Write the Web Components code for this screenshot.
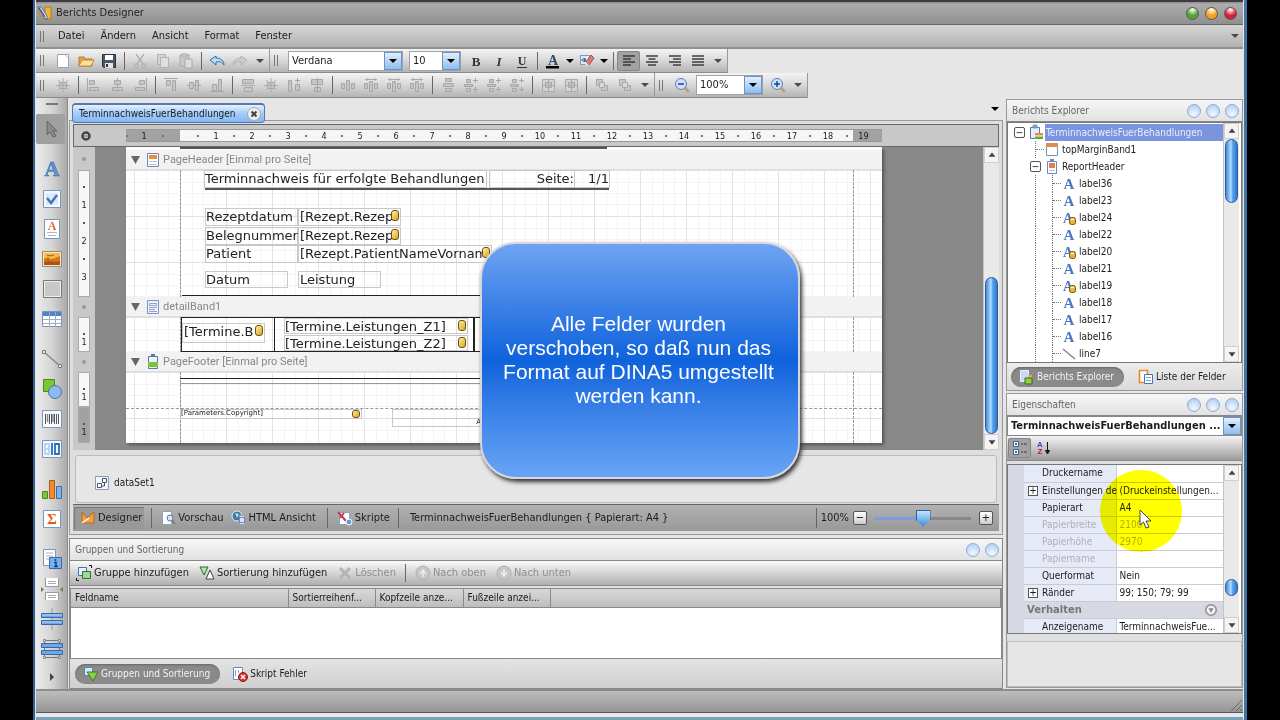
<!DOCTYPE html>
<html lang="de">
<head>
<meta charset="utf-8">
<title>Berichts Designer</title>
<style>
html,body{margin:0;height:100%;background:#000}
body{font:10px/14px "DejaVu Sans Condensed","DejaVu Sans",sans-serif;color:#1c1c1c}
</style>
</head>
<body>
<report-designer></report-designer>
<script>
const define=(name,css,html,setup)=>{
  const t=document.createElement('template');
  t.innerHTML=`<style>*{box-sizing:border-box}button,select,input{font:inherit;color:inherit;margin:0}button{background:none;border:0;padding:0}${css}</style>${html}`;
  customElements.define(name,class extends HTMLElement{
    constructor(){super();this.attachShadow({mode:'open'}).append(t.content.cloneNode(true));}
    connectedCallback(){if(setup&&!this.ready){this.ready=true;setup(this,this.shadowRoot);}}
  });
};

/* ---------- icons ---------- */
const serif='font-family="Liberation Serif,serif" font-weight="bold" text-anchor="middle"';
const db='<rect x="8.5" y="7.5" width="6" height="7" rx="2" fill="#e5b23a" stroke="#7d5712"/><path d="M10 9.5h3" stroke="#fff3b8" stroke-width="1.5"/>';
const bars=w=>[3,6,9,12].map((y,i)=>`<path d="M${8-w[i]/2} ${y}h${w[i]}" stroke="#333" stroke-width="1.4"/>`).join('');
const g='fill="#c6c6c6" stroke="#a6a6a6"';
const ICONS={
 app:'<path d="M2 3l6 9V2h6v12H6L1 6z" fill="#f2b62c" stroke="#a86a10" stroke-width=".7"/><path d="M1 2h3l6 9v3l-3-1z" fill="#e8f0fb" stroke="#33549a" stroke-width=".8"/><path d="M2 3l6 9" stroke="#3c62b5" stroke-width="1.5"/>',
 new:'<path d="M2.5 1.5h11v13h-11z" fill="#fff" stroke="#98a4b8"/><path d="M10 2l3 3" stroke="#c5cedd"/>',
 open:'<path d="M1 13V4h5l1 2h7v7z" fill="#e8a74a" stroke="#a7681c" stroke-width=".8"/><path d="M1 13l3-6h12l-3 6z" fill="#ffdf97" stroke="#b77c2a" stroke-width=".8"/>',
 save:'<path d="M1.5 1.5h13v13h-12l-1-1z" fill="#4b5666" stroke="#27303c"/><path d="M4 2h8v5H4z" fill="#fff"/><path d="M4 10h8v5H4z" fill="#dfe5ec"/><path d="M5 11h2v3H5z" fill="#333"/>',
 cut:'<path d="M4 1l7 10M12 1L5 11" stroke="#b2b2b2" stroke-width="1.4"/><g fill="none" stroke="#b2b2b2" stroke-width="1.3"><circle cx="4" cy="13" r="2"/><circle cx="12" cy="13" r="2"/></g>',
 copy:'<path d="M2.5 1.5h8v10h-8z" fill="#d4d4d4" stroke="#b2b2b2"/><path d="M5.5 4.5h8v10h-8z" fill="#dedede" stroke="#b2b2b2"/>',
 paste:'<path d="M2 2h9v11H2z" fill="#c8c8c8" stroke="#aaa"/><path d="M4 1h5v2H4zM7 6h7v9H7z" fill="#ddd" stroke="#aaa"/>',
 undo:'<path d="M1 7l6-4v2c5 0 8 3 8 7-2-3-4-4-8-3v3z" fill="#b9dcf5" stroke="#2f6ea3"/>',
 redo:'<path d="M15 7L9 3v2C4 5 1 8 1 12c2-3 4-4 8-3v3z" fill="#ccc" stroke="#b2b2b2"/>',
 down:'<path d="M4 6h8l-4 4z" fill="#4a4a4a"/>',
 downb:'<path d="M4 6h8l-4 4z" fill="#000"/>',
 right:'<path d="M6 4v8l4-4z" fill="#444"/>',
 bold:`<text x="8" y="13" font-size="13" ${serif} fill="#333">B</text>`,
 italic:`<text x="8" y="13" font-size="13" font-style="italic" ${serif} fill="#333">I</text>`,
 underline:`<text x="8" y="12" font-size="12" ${serif} fill="#333">U</text><path d="M3 14.5h10" stroke="#333"/>`,
 color:`<text x="8" y="12" font-size="14" ${serif} fill="#33486b">A</text><path d="M1 13h13v2.5H1z" fill="#000"/>`,
 mark:'<path d="M1.5 2.5h9v9h-9z" fill="#dbe9fb" stroke="#6f9bd3"/><path d="M3 8c0-3 3-3 3 0M6 5v4M4 8h2" stroke="#246" fill="none"/><path d="M7 9l5-7 3 3-5 7z" fill="#e07a7a" stroke="#a34949"/><path d="M7 9l3 3-4 1z" fill="#f4d6c8"/><path d="M2 14.5h11" stroke="#bbb"/>',
 left:[3,6,9,12].map((y,i)=>`<path d="M2 ${y}h${i%2?8:12}" stroke="#333" stroke-width="1.4"/>`).join(''),
 center:bars([12,7,12,8]),
 rightal:[3,6,9,12].map((y,i)=>`<path d="M${i%2?6:2} ${y}H14" stroke="#333" stroke-width="1.4"/>`).join(''),
 justify:bars([12,12,12,12]),
 agrid:`<path d="M4.5 5.5h7v6h-7z" ${g}/><path d="M8 1v14M1 8.5h14M3 3l2 2M13 3l-2 2M3 13l2-2M13 13l-2-2" stroke="#aaa"/>`,
 al:`<path d="M1.5 1v14" stroke="#a6a6a6"/><path d="M3.5 3.5h5v4h-5zM3.5 10.5h9v3h-9z" ${g}/>`,
 ac:`<path d="M8.5 1v14" stroke="#a6a6a6"/><path d="M5.5 3.5h6v4h-6zM3.5 10.5h10v3h-10z" ${g}/>`,
 ar:`<path d="M14.5 1v14" stroke="#a6a6a6"/><path d="M7.5 3.5h5v4h-5zM3.5 10.5h9v3h-9z" ${g}/>`,
 at:`<path d="M1 1.5h14" stroke="#a6a6a6"/><path d="M3.5 3.5h4v5h-4zM9.5 3.5h3v10h-3z" ${g}/>`,
 am:`<path d="M1 8.5h14" stroke="#a6a6a6"/><path d="M3.5 5.5h4v6h-4zM9.5 3.5h3v10h-3z" ${g}/>`,
 ab:`<path d="M1 14.5h14" stroke="#a6a6a6"/><path d="M3.5 7.5h4v6h-4zM9.5 2.5h3v11h-3z" ${g}/>`,
 sw:`<path d="M2.5 2.5h11v4h-11zM4.5 10.5h8v4h-8z" ${g}/><path d="M1 8.5h14" stroke="#a6a6a6"/>`,
 sh:`<path d="M2.5 3.5h3v11h-3zM9.5 7.5h4v6h-4z" ${g}/><path d="M11.5 1v5M9 3.5h5" stroke="#a6a6a6"/>`,
 sb:`<path d="M2.5 2.5h11v5h-11zM5.5 10.5h6v4h-6z" ${g}/><path d="M8.5 1v14" stroke="#a6a6a6"/>`,
 hz:`<path d="M1.5 6.5h3v5h-3zM6.5 3.5h3v10h-3zM11.5 6.5h3v5h-3z" ${g}/>`,
 ht:`<path d="M1.5 6.5h3v5h-3zM6.5 4.5h3v10h-3zM11.5 6.5h3v5h-3z" ${g}/><path d="M2 2.5h12M4 1v3M12 1v3" stroke="#aaa"/>`,
 vz:`<path d="M5.5 1.5h6v3h-6zM3.5 6.5h10v3h-10zM5.5 11.5h6v3h-6z" ${g}/>`,
 vp:`<path d="M3.5 2.5h4v3h-4zM1.5 7.5h8v2h-8zM3.5 11.5h4v3h-4z" ${g}/><path d="M12.5 1v5M10 3.5h5M12.5 10v5M10 12.5h5" stroke="#a6a6a6"/>`,
 fr:`<path d="M2.5 2.5h12v12h-12z" fill="#d4d4d4" stroke="#aaa"/><path d="M5.5 5.5h6v5h-6z" ${g}/><path d="M8.5 2v13M2 8.5h13" stroke="#aaa"/>`,
 fo:`<path d="M2.5 2.5h6v6h-6zM7.5 8.5h6v5h-6z" ${g}/><path d="M5.5 5.5h5v5h-5z" fill="#d8d8d8" stroke="#aaa"/>`,
 zout:'<path d="M11 11l4 4" stroke="#c99b78" stroke-width="3"/><circle cx="7" cy="7" r="5.5" fill="#cfe0f8" stroke="#5a7fb8"/><path d="M4 7h6" stroke="#1d4690" stroke-width="1.5"/>',
 zin:'<path d="M11 11l4 4" stroke="#c99b78" stroke-width="3"/><circle cx="7" cy="7" r="5.5" fill="#cfe0f8" stroke="#5a7fb8"/><path d="M4 7h6M7 4v6" stroke="#1d4690" stroke-width="1.5"/>',
 gear:'<circle cx="8" cy="8" r="3.5" fill="#d6d6d6" stroke="#444" stroke-width="2.5"/><path d="M6.5 8h3" stroke="#444"/>',
 dot:'<circle cx="8" cy="8" r="2" fill="#999"/>',
 tri:'<path d="M4 4h9l-4.5 8z" fill="#666"/>',
 bandh:'<path d="M2.5 1.5h11v13h-11z" fill="#fff" stroke="#6b86b5"/><path d="M4 3h8v4H4z" fill="#ee8a3c"/><path d="M4 9.5h8M4 12.5h8" stroke="#b8c5dc"/>',
 bandd:'<path d="M2.5 1.5h11v13h-11z" fill="#eef3fb" stroke="#7a92bc"/><path d="M4.5 4.5h7v2h-7zM4 8.5h8M4 10.5h6M4 12.5h8" stroke="#8fa3c8" fill="none"/>',
 bandf:'<path d="M3.5 2.5h9v12h-9z" fill="#eef3fb" stroke="#5577ad"/><path d="M6 0h4v3H6z" fill="#5577ad"/><path d="M3 8h10v5H3z" fill="#7cc33c"/>',
 clip:'<path d="M2.5 2.5h9v11h-9z" fill="#e6eefb" stroke="#5a79ab"/><path d="M5 0h4v3H5z" fill="#8aa4cc" stroke="#5a79ab" stroke-width=".6"/><path d="M7 8h8v3H7z" fill="#ef8a2e"/><path d="M7 11h8v3H7z" fill="#5fa83a"/><path d="M7 11h8" stroke="#fff"/>',
 topm:'<path d="M2.5 2.5h11v11h-11z" fill="#fff" stroke="#7d93bb"/><path d="M2 1h12v4H2z" fill="#e58a4e"/>',
 rephead:'<path d="M3.5 2.5h9v12h-9z" fill="#fff" stroke="#6c88b8"/><path d="M6 0h4v3H6z" fill="#6c88b8"/><path d="M5 4h6v5H5z" fill="#dd8350"/><path d="M5 11.5h6" stroke="#b8c5dc"/>',
 lab:`<text x="8" y="13" font-size="15" ${serif} fill="#4779c4">A</text>`,
 labdb:`<text x="7" y="13" font-size="14" ${serif} fill="#4779c4">A</text>${db}`,
 line:'<path d="M2 3l12 10" stroke="#888" stroke-width="1.5"/>',
 explorer:'<path d="M1.5 1.5h8v11h-8z" fill="#c9daf5" stroke="#e8eefa"/><path d="M9 6h4v5H9z" fill="#d9b64e"/><path d="M6 9h7v6H6z" fill="#8fcf4a" stroke="#356a16"/>',
 fields:'<path d="M1.5 1.5h8v12h-8z" fill="#fff" stroke="#e08a33" stroke-width="1.6"/><path d="M6.5 5.5h8v9h-8z" fill="#fff" stroke="#4775b8"/><path d="M8 8.5h5M8 11.5h5" stroke="#7ba0d8"/>',
 cat:'<path d="M1.5 1.5h5v5h-5zM1.5 9.5h5v5h-5z" fill="#f4f8ff" stroke="#3b5f94"/><path d="M3 4h2M4 3v2M3 12h2M4 11v2M9 4h2M12 4h3M9 12h2M12 12h3" stroke="#2b3c58"/>',
 az:'<text x="5" y="7" font-size="8" font-weight="bold" text-anchor="middle" font-family="Liberation Sans,sans-serif" fill="#3358b8">A</text><text x="5" y="14" font-size="8" font-weight="bold" text-anchor="middle" font-family="Liberation Sans,sans-serif" fill="#a3282c">Z</text><path d="M12.5 2v9M10.5 10.5l2 3.5 2-3.5z" stroke="#111" fill="#111"/>',
 dataset:'<path d="M1.5 1.5h13v13h-13z" fill="#f3f6fb" stroke="#8c9bb5"/><path d="M8.5 3.5h4v4h-4zM3.5 8.5h4v4h-4z" fill="#fff" stroke="#44566f"/><path d="M10.5 8v3H8" stroke="#44566f" fill="none"/>',
 design:'<path d="M2 2l5 6 7-6v11H2z" fill="#f3a13d" stroke="#b86a1c"/><path d="M2 13l7-5" stroke="#fff" stroke-width="1.5"/>',
 preview:'<path d="M2.5 1.5h9v13h-9z" fill="#fff" stroke="#8da0bf"/><circle cx="10" cy="8" r="3" fill="#d5e6f8" stroke="#57779f"/><path d="M12 10l3 4" stroke="#777" stroke-width="1.5"/>',
 html:'<circle cx="6" cy="6" r="5" fill="#3b78b4" stroke="#eee"/><path d="M4 3l4 1-2 4z" fill="#bfe2b0"/><path d="M8.5 5.5h5v9h-5z" fill="#fff" stroke="#8da0bf"/><circle cx="11" cy="10" r="3" fill="#d5e6f8" stroke="#57779f"/>',
 script:'<path d="M2.5 2.5h10v12h-10z" fill="#fff" stroke="#8da0bf"/><path d="M1 2l8 9M7 3L3 8" stroke="#c33a54" stroke-width="2"/><circle cx="12" cy="12" r="3" fill="#5d9de0" stroke="#fff"/>',
 addgroup:'<path d="M2.5 2.5h8v8h-8z" fill="#e9f2fd" stroke="#4770ae"/><path d="M6.5 6.5h8v7h-8z" fill="#9edb91" stroke="#337330"/><path d="M.5 13v2.5H3M13 .5h2.5V3" stroke="#111" fill="none"/>',
 addsort:'<path d="M1 2h8l-4 8z" fill="#b8e0ae" stroke="#2f6a34"/><path d="M11 5l4 9H7z" fill="#fff" stroke="#444"/>',
 del:'<path d="M3 3l10 10M13 3L3 13" stroke="#b4b4b4" stroke-width="3"/>',
 up:'<circle cx="8" cy="8" r="7" fill="#c6c6c6" stroke="#b0b0b0"/><path d="M5 9l3-4 3 4M8 5v7" stroke="#eee" stroke-width="1.5" fill="none"/>',
 dn:'<circle cx="8" cy="8" r="7" fill="#c6c6c6" stroke="#b0b0b0"/><path d="M5 7l3 4 3-4M8 11V4" stroke="#eee" stroke-width="1.5" fill="none"/>',
 grp:'<path d="M1.5 1.5h8v8h-8z" fill="#d7e6fa" stroke="#5b83b8"/><path d="M4 6h11l-5 9z" fill="#8bd04a" stroke="#3d7d1b"/>',
 err:'<path d="M1.5 1.5h9v12h-9z" fill="#fff" stroke="#6d88b3"/><path d="M3.5 4v6M6.5 4v3" stroke="#7ba0d8"/><circle cx="11" cy="11" r="4.5" fill="#d6332f" stroke="#8c1613"/><path d="M9 9l4 4M13 9l-4 4" stroke="#fff" stroke-width="1.4"/>',
 close:'<circle cx="8" cy="8" r="6.5" fill="#eee" stroke="#aaa"/><path d="M5.5 5.5l5 5M10.5 5.5l-5 5" stroke="#444" stroke-width="2"/>',
 scup:'<path d="M4 10l4-5 4 5z" fill="#444"/>',
 scdown:'<path d="M4 6l4 5 4-5z" fill="#444"/>',
 resize:'<path d="M15 4L4 15M15 9l-6 6M15 13l-2 2" stroke="#6a6a6a"/>',
 chev:'<circle cx="8" cy="8" r="6" fill="#f4f4f4" stroke="#999" stroke-width="2"/><path d="M5 6h6l-3 5z" fill="#888"/>'
};
/* toolbox icons on a 22 unit grid */
const BIG={
 pointer:'<path d="M7 3v14l3-3 3 5 3-1-3-5h4z" fill="#8a8a8a" stroke="#666"/>',
 alabel:`<text x="11" y="18" font-size="21" ${serif} fill="#5b93cf" stroke="#3c6ea8" stroke-width=".5">A</text>`,
 check:'<path d="M2.5 2.5h17v17h-17z" fill="#f5f8fd" stroke="#7c95bd"/><path d="M5 5h12v12H5z" fill="#dfe9f7"/><path d="M6 10l4 5 6-8" stroke="#4377ba" stroke-width="2.5" fill="none"/>',
 rich:`<path d="M3.5 1.5h15v19h-15z" fill="#fff" stroke="#7c95bd"/><text x="11" y="12" font-size="12" ${serif} fill="#e26a3a">A</text><path d="M6 14.5h10M7 17.5h8" stroke="#a9b9d4"/>`,
 pic:'<path d="M1.5 3.5h19v15h-19z" fill="#f4e9d4" stroke="#9a8a6a"/><path d="M3 5h16v12H3z" fill="#d9761c"/><path d="M3 5h16v3l-8 3-8-1z" fill="#f7b947"/><path d="M6 7c2 1 5 1 7 0M7 9v4" stroke="#a0561a" fill="none"/><path d="M3 14c5-2 10 1 16-1v4H3z" fill="#a9540f"/>',
 panel:'<path d="M2.5 2.5h18v17h-18z" fill="#eee" stroke="#777"/><path d="M4 4h15v14H4z" fill="#c8c8c8"/>',
 table:'<path d="M1.5 3.5h19v15h-19z" fill="#fff" stroke="#7d92b6"/><path d="M2 4h18v4H2z" fill="#4c84cc"/><path d="M2 11.5h18M2 15.5h18M8.5 4v15M14.5 4v15" stroke="#9aacc9"/>',
 bline:'<path d="M3 4l16 14" stroke="#888" stroke-width="1.5"/><path d="M1.5 2.5h3v3h-3zM17.5 16.5h3v3h-3z" fill="#eee" stroke="#777"/>',
 shape:'<path d="M2.5 1.5h11v12h-11z" fill="#7cc62f" stroke="#4b8a16"/><circle cx="14" cy="14" r="6.5" fill="#8fb9ea" stroke="#4770a8"/>',
 barcode:'<path d="M1.5 2.5h19v17h-19z" fill="#f7f9fc" stroke="#7c95bd"/><path d="M4.5 6v10M8.5 6v10M10.5 6v10M13.5 6v10M15.5 6v10M17.5 6v10" stroke="#555"/><path d="M6.5 6v8M12 6v8" stroke="#888" stroke-width="1.5"/>',
 digit:'<path d="M1.5 2.5h19v17h-19z" fill="#f4f8fd" stroke="#7c95bd"/><path d="M4 6h4v10H4zM4 11h4" stroke="#a9cbea" stroke-width="1.5" fill="none"/><path d="M11 5v12M14 6h4v10h-4z" stroke="#2c6cb8" stroke-width="1.8" fill="none"/>',
 chart:'<path d="M1.5 13.5h5v7h-5z" fill="#7ec43a" stroke="#4e8a1d"/><path d="M8.5 2.5h5v18h-5z" fill="#f08a33" stroke="#ad5a18"/><path d="M15.5 8.5h5v12h-5z" fill="#7fb1ee" stroke="#41689f"/>',
 sum:'<path d="M2.5 2.5h17v17h-17z" fill="#fff" stroke="#7c95bd"/><text x="11" y="16" font-size="15" font-weight="bold" text-anchor="middle" font-family="Liberation Serif,serif" fill="#df5d21">Σ</text>',
 info:'<path d="M2.5 1.5h12v16h-12z" fill="#fff" stroke="#8095b8"/><path d="M5 5h7M5 8h7M5 11h3" stroke="#9fb0cb"/><path d="M8.5 9.5h12v11h-12z" fill="#7bb0ee" stroke="#3c68a5"/><path d="M14.5 11v2M13 14.5h2v4M13 18.5h4" stroke="#123f80" stroke-width="1.5" fill="none"/>',
 brk:'<path d="M4.5 0v8.5h13V0M4.5 22v-7.5h13V22" fill="#fff" stroke="#999"/><path d="M7 3.5h8M7 5.5h8M7 17.5h8M7 19.5h8" stroke="#aaa"/><path d="M0 9l3 2.5L0 14zM22 9l-3 2.5 3 2.5z" fill="#5a8a44"/>',
 cross:'<path d="M11 0v22" stroke="#999"/><path d="M.5 5.5h21v4H.5zM.5 12.5h21v4H.5z" fill="#6fa6e8" stroke="#3a68a6"/><path d="M1 7h20M1 14h20" stroke="#b9d6f7"/>',
 xbox:'<path d="M3.5 2.5h15v17h-15z" fill="none" stroke="#777"/><path d="M.5 5.5h21v4H.5zM.5 12.5h21v4H.5z" fill="#6fa6e8" stroke="#3a68a6"/><path d="M2.5 1.5h2v2h-2zM17.5 1.5h2v2h-2zM2.5 18.5h2v2h-2zM17.5 18.5h2v2h-2z" fill="#eee" stroke="#888"/>'
};
define('ui-icon',':host{display:inline-flex;flex:none;width:16px;height:16px}:host([big]){width:22px;height:22px}:host([small]){width:14px;height:14px}svg{width:100%;height:100%;display:block;overflow:visible}','<svg aria-hidden="true"></svg>',
 (h,r)=>{const n=h.getAttribute('name'),s=r.querySelector('svg');if(!n)return;
  s.setAttribute('viewBox',n in BIG?'0 0 22 22':'0 0 16 16');s.innerHTML=BIG[n]||ICONS[n];});
const iconNode=n=>{const i=document.createElement('ui-icon');i.setAttribute('name',n);return i;};

/* ---------- generic controls ---------- */
define('tool-button',':host{display:flex;width:23px;height:20px}:host([narrow]){width:11px}:host([more]){width:18px}button{flex:1;min-width:0;display:flex;align-items:center;justify-content:center}:host([on]) button{background:#a2a2a2;border:1px solid #868686;border-radius:2px}',
 '<button type="button"></button>',(h,r)=>{const b=r.querySelector('button');b.setAttribute('aria-label',h.getAttribute('label')||h.getAttribute('icon'));b.append(iconNode(h.getAttribute('icon')));});
define('tool-sep',':host{display:flex;justify-content:center;width:8px;height:18px}i{width:1px;background:#666}','<i></i>');
define('tool-strip',':host{display:flex;align-items:center;height:24px;background:linear-gradient(#f4f4f4,#d8d8d8 50%,#b4b4b4);border-right:1px solid #999;border-bottom:1px solid #8a8a8a}:host([tall]){height:25px}i{width:4px;height:11px;border:1px solid #777;border-width:0 1px;margin:0 7px 0 4px}','<i></i><slot></slot>');
define('combo-box',':host{display:grid;grid-template-columns:1fr 18px;height:20px;border:1px solid #9aa3ae;background:#fff;margin:0 3px;font-size:11px}select{grid-area:1/1/2/3;appearance:none;border:0;background:none;padding:0 20px 0 3px;min-width:0;width:100%;text-overflow:ellipsis}b{grid-area:1/2;pointer-events:none;display:flex;align-items:center;justify-content:center;background:linear-gradient(#e2effc,#8fbcee);border:1px solid #6c93c4}:host([wide]){margin:0;border-color:#888}:host([wide]) select{font-weight:bold}',
 '<select></select><b><ui-icon name="downb"></ui-icon></b>',(h,r)=>{const s=r.querySelector('select');s.setAttribute('aria-label',h.getAttribute('label'));s.innerHTML=`<option>${h.getAttribute('value')}</option>`;});
define('pane-header',':host{display:flex;align-items:center;height:22px;padding:0 3px 0 5px;color:#666;background:linear-gradient(#f6f6f6,#e2e2e2);border-bottom:1px solid #888}span{flex:1}div{display:flex;gap:5px}button{width:14px;height:14px;border-radius:7px;border:1px solid #8fabd6;background:radial-gradient(circle at 50% 75%,#f2f8ff,#a9c8f0)}',
 '<span><slot></slot></span><div></div>',(h,r)=>{r.querySelector('div').innerHTML=Array.from({length:+h.getAttribute('buttons')},(_,i)=>`<button type="button" aria-label="Fensterknopf ${i+1}"></button>`).join('');});
define('pill-tab',':host{display:flex;flex:none}button{display:flex;align-items:center;gap:2px;height:20px;padding:0 10px 0 8px;border-radius:10px;white-space:nowrap}:host([on]) button{background:#8a8a8a;color:#f2f2f2;box-shadow:inset 0 1px 2px #666}',
 '<button type="button"><slot></slot></button>',(h,r)=>r.querySelector('button').prepend(iconNode(h.getAttribute('icon'))));
define('text-button',':host{display:flex;flex:none;font-size:11px}button{display:flex;align-items:center;gap:2px;height:22px;padding:0 2px;white-space:nowrap}:host([on]) button{background:#999;box-shadow:inset 1px 1px 1px #777;padding:0 2px 0 6px}:host([off]){color:#8e8e8e}',
 '<button type="button"><slot></slot></button>',(h,r)=>r.querySelector('button').prepend(iconNode(h.getAttribute('icon'))));
define('scroll-bar',':host{display:flex;flex:none;flex-direction:column;width:16px;background:#e9e9e9;border-left:1px solid #c4c4c4}button{height:16px;background:#f4f4f4;border:1px solid #cfcfcf;display:flex;align-items:center;justify-content:center}div{flex:1;display:flex;flex-direction:column;align-items:center}u{flex:var(--before,0) 0 0}i{flex:var(--size,3) 0 0;width:13px;border:1px solid #2d5b94;border-radius:7px;background:linear-gradient(90deg,#3f8be0,#b5defc 45%,#5aa5ee 60%,#3276cc)}s{flex:var(--after,7) 0 0}',
 '<button type="button" aria-label="Nach oben blättern"><ui-icon small name="scup"></ui-icon></button><div><u></u><i></i><s></s></div><button type="button" aria-label="Nach unten blättern"><ui-icon small name="scdown"></ui-icon></button>');

/* ---------- window frame ---------- */
define('title-bar',':host{display:flex;align-items:center;height:25px;padding:0 6px 0 1px;font-size:11px;background:linear-gradient(#8c8c8c,#adadad 10%,#8f8f8f);border-top:2px solid #3d3a40;border-bottom:1px solid #666;color:#222}span{flex:1;margin-left:3px}div{display:flex;gap:6px}button{width:13px;height:13px;border-radius:7px;border:1px solid #555;background:radial-gradient(circle at 50% 15%,#fff,var(--c) 55%)}',
 '<ui-icon name="app"></ui-icon><span>Berichts Designer</span><div><button style="--c:#4ea52f" aria-label="Minimieren"></button><button style="--c:#f0a21c" aria-label="Maximieren"></button><button style="--c:#d81e35" aria-label="Schließen"></button></div>');
define('menu-bar',':host{display:flex;align-items:center;height:24px;font-size:11px;background:linear-gradient(#d6d6d6,#b2b2b2);border-bottom:2px solid #909090}i{width:4px;height:11px;border:1px solid #777;border-width:0 1px;margin:0 14px 0 4px}nav{display:flex;gap:16px;flex:1}',
 '<i></i><nav><button>Datei</button><button>Ändern</button><button>Ansicht</button><button>Format</button><button>Fenster</button></nav><ui-icon name="down"></ui-icon>');
const B=(...n)=>n.map(x=>`<tool-button icon="${x}"></tool-button>`).join('');
const S='<tool-sep></tool-sep>',M='<tool-button more icon="down" label="Weitere"></tool-button>';
define('tool-bars',':host{display:block;background:#e6e6e6}div{display:flex}',
 `<div><tool-strip>${B('new','open','save')}${S}${B('cut','copy','paste')}${S}${B('undo','redo')}${M}</tool-strip>
 <tool-strip><combo-box style="width:115px" label="Schriftart" value="Verdana"></combo-box><combo-box style="width:52px" label="Schriftgröße" value="10"></combo-box>${B('bold','italic','underline')}${S}${B('color')}<tool-button narrow icon="downb"></tool-button>${B('mark')}<tool-button narrow icon="downb"></tool-button>${S}<tool-button on icon="left"></tool-button>${B('center','rightal','justify')}${M}</tool-strip></div>
 <div><tool-strip tall>${B('agrid')}${S}${B('al','ac','ar')}${S}${B('at','am','ab')}${S}${B('sw','agrid','sh','sb')}${S}${B('hz','ht','ht','ht')}${S}${B('vz','vp','vp','vp')}${S}${B('fr','fr')}${S}${B('fo','fo')}${M}</tool-strip>
 <tool-strip tall>${B('zout')}<combo-box style="width:67px" label="Zoom" value="100%"></combo-box>${B('zin')}${M}</tool-strip></div>`);
const TB=(...n)=>n.map(x=>`<button type="button" aria-label="${x}"><ui-icon big name="${x}"></ui-icon></button>`).join('');
define('tool-box',':host{display:flex;flex:none;flex-direction:column;width:32px;padding-top:4px;background:linear-gradient(90deg,#ececec,#d2d2d2 55%,#a9a9a9);border-right:1px solid #8b8b8b}i{height:4px;width:12px;margin:1px 10px 9px;border:1px solid #777;border-width:1px 0}button{height:30px;flex:none;display:flex;align-items:center;justify-content:center}button.on{background:#a0a0a0;border-radius:2px;margin-right:2px}hr{width:25px;height:1px;margin:5px 3px;border:0;background:#666}button.more{height:26px}',
 `<i></i><button class="on" type="button" aria-label="Zeiger"><ui-icon big name="pointer"></ui-icon></button><hr>${TB('alabel','check','rich','pic','panel','table')}<hr>${TB('bline','shape','barcode','digit')}<hr>${TB('chart','sum')}<hr>${TB('info','brk','cross','xbox')}<button class="more" type="button" aria-label="Mehr"><ui-icon name="right"></ui-icon></button>`);

/* ---------- report document ---------- */
define('top-ruler',':host{display:flex;align-items:center;height:23px;background:#c8c8c8;border:1px solid #666;font-size:9px;line-height:12px}ui-icon{margin:0 32px 0 4px}div{display:flex;height:13px;border:1px solid #999;border-width:1px 0}b,span{font-weight:normal;text-align:center}.d{background:#a2a2a2}.w{background:#f6f6f6;width:673px;padding-left:18px}.w span,.l span{width:36px;position:relative}.w span::before,.l span::before,.l::after,.w::after{content:"";width:2px;height:2px;background:#777;display:block;position:absolute;top:5px;left:-1px}.l span::before{left:0}.l{width:54px;position:relative}.w{position:relative}.l::after{left:36px}.w::after{left:666px}.r{width:29px;padding-right:8px}',
 `<ui-icon name="gear"></ui-icon><div class="d l"><span>1</span></div><div class="w">${Array.from({length:18},(_,i)=>`<span>${i+1}</span>`).join('')}</div><div class="d r"><b style="flex:1">19</b></div>`);
define('side-ruler',':host{display:block;flex:none;width:22px;background:#c8c8c8;padding:0 5px;font-size:9px;line-height:12px}header{height:20px;display:flex;align-items:center;justify-content:center}header.f{height:23px}div{background:#f6f6f6;border:1px solid #aaa;padding-top:16px;height:35px;display:flex;flex-direction:column}div.a{height:127px}div.d{background:#a2a2a2;height:36px}span{height:36px;flex:none;position:relative;display:flex;align-items:center;justify-content:center}span.s{height:16px}span::before{content:"";position:absolute;top:-1px;left:4px;width:2px;height:2px;background:#555}',
 '<header class="f"><ui-icon name="dot"></ui-icon></header><div class="a"><span>1</span><span>2</span><span>3</span></div><header><ui-icon name="dot"></ui-icon></header><div><span class="s">1</span></div><header><ui-icon name="dot"></ui-icon></header><div><span class="s">1</span></div><div class="d"><span class="s">1</span></div>');
define('data-badge',':host{position:absolute;right:1px;top:1px;width:8px;height:11px;border:1px solid #70500f;border-radius:3px;background:linear-gradient(135deg,#fff0a0,#dba525)}','');
define('report-field',':host{position:absolute;display:flex;border:1px solid #c8c8c8;font:13px/15px "DejaVu Sans",sans-serif;color:#222;white-space:nowrap}:host([pad]){padding-left:1px}:host([end]){justify-content:flex-end}:host([tiny]){font-size:7px;line-height:7px}:host([tiny]) data-badge{height:8px;top:0}',
 '<span><slot></slot></span>',(h,r)=>{if(h.hasAttribute('bound'))r.append(document.createElement('data-badge'));});
define('report-band',':host{display:block;position:relative}header{height:20px;display:flex;align-items:center;gap:2px;padding-left:1px;background:#f2f2f2;color:#888;font:11px/14px Roboto,"Liberation Sans",sans-serif;border-bottom:1px solid #ddd}div{position:relative;overflow:hidden}svg{position:absolute;inset:0;width:100%;height:100%}',
 '<header><ui-icon name="tri"></ui-icon><span></span></header><div><svg aria-hidden="true"><defs><pattern id="g" width="46" height="46" x="8" y="0" patternUnits="userSpaceOnUse"><path d="M12.5 0v46M23.5 0v46M34.5 0v46M0 12.5h46M0 23.5h46M0 34.5h46" stroke="#f4f4f4"/><path d="M.5 0v46M0 .5h46" stroke="#e3e3e3"/></pattern></defs><rect width="100%" height="100%" fill="url(#g)"/><path d="M54.5 0v200M727.5 0v200" stroke="#999" stroke-dasharray="3 1"/></svg><slot></slot></div>',
 (h,r)=>{const s=r.querySelector('span');s.textContent=h.getAttribute('caption');s.before(iconNode(h.getAttribute('icon')));r.querySelector('div').style.height=h.getAttribute('size')+'px';});
const F=(x,y,w,h,t,a='')=>`<report-field ${a} style="left:${x}px;top:${y}px;width:${w}px;height:${h}px">${t}</report-field>`;
const L=(x,y,w,h,c='#222')=>`<i style="left:${x}px;top:${y}px;width:${w}px;height:${h}px;background:${c}"></i>`;
define('report-page',':host{display:block;width:756px;background:#fff;box-shadow:2px 2px 3px #555}i{position:absolute}.top{height:3px;display:flex}.top b{margin-left:54px;width:427px;height:2px;background:#555}',
 `<div class="top"><b></b></div>
 <report-band icon="bandh" caption="PageHeader [Einmal pro Seite]" size="127">
 ${F(78,0,283,18,'Terminnachweis für erfolgte Behandlungen')}${F(363,0,86,18,'Seite:','end')}${F(448,0,36,18,'1/1','end')}${L(79,18,404,2,'#555')}
 ${F(79,38,93,18,'Rezeptdatum')}${F(172,38,103,18,'[Rezept.Rezep','bound pad')}${F(79,57,93,18,'Belegnummer')}${F(172,57,103,18,'[Rezept.Rezep','bound pad')}${F(79,75,93,18,'Patient')}${F(172,75,194,18,'[Rezept.PatientNameVornam','bound pad')}
 ${F(79,101,83,17,'Datum')}${F(172,101,83,17,'Leistung','pad')}${L(56,125,427,1)}</report-band>
 <report-band icon="bandd" caption="detailBand1" size="35">${L(55,0,428,1)}${L(55,34,428,1)}${L(55,0,1,35)}${L(148,0,1,35)}${L(347,0,2,35)}
 ${F(56,6,83,20,'[Termine.B','bound pad')}${F(158,1,184,16,'[Termine.Leistungen_Z1]','bound')}${F(158,18,184,16,'[Termine.Leistungen_Z2]','bound')}</report-band>
 <report-band icon="bandf" caption="PageFooter [Einmal pro Seite]" size="71">${L(54,6,429,1)}${L(54,11,429,1,'#999')}<i style="left:0;right:0;top:36px;border-top:1px dashed #999"></i>
 ${F(54,37,182,10,'[Parameters.Copyright]','tiny bound')}${F(266,37,120,10,'','tiny')}${F(266,46,90,9,'A','tiny end')}</report-band>`);
define('status-tabs',':host{display:flex;align-items:center;height:27px;background:linear-gradient(#b2b2b2,#989898);border-top:1px solid #666;font-size:11px;padding:0 6px 0 1px}tool-sep{width:14px;height:20px}.h{display:flex;gap:3px;padding-right:3px}.t{margin-left:4px;flex:1}.z{display:flex;align-items:center;gap:4px}.z button{width:14px;height:14px;border:1px solid #555;border-radius:2px;background:linear-gradient(#fff,#ccc);display:flex;align-items:center;justify-content:center;line-height:10px}input{appearance:none;width:104px;height:18px;background:linear-gradient(90deg,#7e9be0 50%,#888 50%) center/96px 3px no-repeat}input::-webkit-slider-thumb{appearance:none;width:15px;height:17px;background:linear-gradient(#bfe6ff,#3f8fdc);clip-path:polygon(0 0,100% 0,100% 60%,50% 100%,0 60%);border:1px solid #28619b}.z tool-sep{width:1px}',
 '<text-button on icon="design">Designer</text-button><tool-sep></tool-sep><div class="h"><text-button icon="preview">Vorschau</text-button><text-button icon="html">HTML Ansicht</text-button></div><tool-sep></tool-sep><text-button icon="script">Skripte</text-button><tool-sep></tool-sep><span class="t">TerminnachweisFuerBehandlungen { Papierart: A4 }</span><div class="z"><tool-sep></tool-sep><span>100%</span><button aria-label="Verkleinern">−</button><input type="range" aria-label="Zoom" min="0" max="100" value="50"><button aria-label="Vergrößern">+</button></div>');
define('report-document',':host{display:flex;flex:none;flex-direction:column}.tabs{height:23px;display:flex;align-items:flex-end;padding:0 0 0 3px;border-bottom:1px solid #999}.tab{display:flex;align-items:center;gap:7px;height:20px;margin-bottom:-3px;position:relative;padding:0 2px 0 6px;border:1px solid #5877ae;border-top-width:2px;border-bottom-color:#4a76b8;border-radius:4px;background:linear-gradient(#e4f2ff,#a3ccf8 50%,#86b9f2)}.tab span{min-width:160px}.tab button{display:flex}.tabs>ui-icon{margin-left:auto;align-self:center}.frame{border:1px solid #999;border-top:0;padding:3px;background:#dedede}.surface{display:flex;background:#888;height:303px}.canvas{flex:1;min-width:0;padding-left:31px;overflow:hidden}.tray{height:48px;margin:5px 2px 1px;display:flex;align-items:center;gap:4px;padding:8px 0 0 18px;border:1px solid #bbb;border-radius:3px;background:#e6e6e6}',
 `<div class="tabs"><div class="tab"><span>TerminnachweisFuerBehandlungen</span><button aria-label="Registerkarte schließen"><ui-icon name="close"></ui-icon></button></div><ui-icon name="downb"></ui-icon></div>
 <div class="frame"><top-ruler></top-ruler><div class="surface"><side-ruler></side-ruler><div class="canvas"><report-page></report-page></div><scroll-bar style="--before:11;--size:15;--after:0"></scroll-bar></div>
 <div class="tray"><ui-icon name="dataset"></ui-icon><span>dataSet1</span></div><status-tabs></status-tabs></div>`);

/* ---------- grouping pane ---------- */
define('group-pane',':host{display:flex;flex-direction:column;border:1px solid #888;background:#e0e0e0}.bar{display:flex;align-items:center;gap:6px;height:25px;padding-left:4px;background:linear-gradient(#fafafa,#b0b0b0);border-bottom:1px solid #888}.bar tool-sep{width:1px;margin:0 1px}.grid{flex:1;min-height:0;margin-top:2px;background:#fff;border:1px solid #888}table{width:100%;border-collapse:collapse;table-layout:fixed}th{height:18px;padding:0 4px;text-align:left;font-weight:normal;background:linear-gradient(#d8d8d8,#bdbdbd);border:1px solid #888;border-width:0 1px 1px 0;white-space:nowrap}footer{display:flex;align-items:center;gap:4px;height:29px;padding:0 5px;background:linear-gradient(#e4e4e4,#cfcfcf)}',
 '<pane-header buttons="2">Gruppen und Sortierung</pane-header><div class="bar"><text-button icon="addgroup">Gruppe hinzufügen</text-button><text-button icon="addsort">Sortierung hinzufügen</text-button><text-button off icon="del">Löschen</text-button><tool-sep></tool-sep><text-button off icon="up">Nach oben</text-button><text-button off icon="dn">Nach unten</text-button></div><div class="grid"><table><thead><tr><th style="width:217px">Feldname</th><th style="width:87px">Sortierreihenf...</th><th style="width:88px">Kopfzeile anze...</th><th style="width:87px">Fußzeile anzei...</th><th aria-label="leer"></th></tr></thead></table></div><footer><pill-tab on icon="grp">Gruppen und Sortierung</pill-tab><pill-tab icon="err">Skript Fehler</pill-tab></footer>');

/* ---------- right hand panes ---------- */
const rows=['36','23','24*','22','20*','21','19*','18','17','16'].map(n=>[n.endsWith('*')?'labdb':'lab','label'+n.replace('*','')]).concat([['line','line7']]);
define('report-tree',':host{display:flex;border:1px solid #777;background:#fff;height:241px}ul{list-style:none;margin:0;padding:1px 0 0 3px;flex:1;min-width:0;overflow:hidden}li{height:17px;display:flex;align-items:center;white-space:nowrap}li.c{padding-left:16px}ui-icon{margin-right:2px}.box{width:17px;flex:none;display:flex;align-items:center}.box b{width:11px;height:11px;border:1px solid #555;border-radius:2px;background:#fff;display:flex;align-items:center;justify-content:center;margin-left:3px;font-weight:normal;line-height:8px}.v{display:flex;align-items:center;flex:none;align-self:stretch;width:9px;margin-left:8px;border-left:1px dotted #777}.t::after{content:"";flex:1;border-top:1px dotted #777}li.sel span{flex:1;align-self:stretch;background:#7a94de;color:#e8edff;display:flex;align-items:center;padding-left:1px}li.sel ui-icon{margin-right:1px}scroll-bar{margin-right:2px}',
 `<ul role="tree"><li class="sel" role="treeitem"><div class="box"><b>−</b></div><ui-icon name="clip"></ui-icon><span>TerminnachweisFuerBehandlungen</span></li>
 <li class="c" role="treeitem"><div class="v t"></div><ui-icon name="topm"></ui-icon><span>topMarginBand1</span></li>
 <li class="c" role="treeitem"><div class="box"><b>−</b></div><ui-icon name="rephead"></ui-icon><span>ReportHeader</span></li>
 ${rows.map(([i,t])=>`<li class="c" role="treeitem"><div class="v"></div><div class="v t"></div><ui-icon name="${i}"></ui-icon><span>${t}</span></li>`).join('')}</ul><scroll-bar style="--before:0;--size:6;--after:14"></scroll-bar>`);
const P=[['','Druckername',''],['+','Einstellungen de','(Druckeinstellungen...'],['','Papierart','A4'],['','Papierbreite','2100',1],['','Papierhöhe','2970',1],['','Papiername','',1],['','Querformat','Nein'],['+','Ränder','99; 150; 79; 99'],0,['','Anzeigename','TerminnachweisFue...']];
define('property-grid',':host{display:flex;position:relative;border:1px solid #777;background:#fff;height:170px;overflow:hidden}.w{flex:1;min-width:0}table{width:100%;border-collapse:collapse;table-layout:fixed}td,th{padding:0;font-weight:normal;text-align:left;border-bottom:1px solid #c9ccd6;white-space:nowrap;line-height:14px;height:17px}.i{background:#d6d8e2;border:0}th{background:#e6e9f6;border-right:1px solid #c9ccd6}th div{display:flex;align-items:center;gap:4px;height:16px}th b{width:10px;height:10px;flex:none;border:1px solid #555;background:#fff;display:flex;align-items:center;justify-content:center;line-height:8px;font-weight:normal;margin-left:4px}th b.n{visibility:hidden}td{padding-left:3px}.off{color:#b0b0b8}.cat td{background:#d6d8e2;color:#777;font:bold 10px/14px "DejaVu Sans",sans-serif}.cat div{display:flex;justify-content:space-between;padding-right:5px;height:16px;align-items:center}scroll-bar{margin-right:2px}.halo{position:absolute;left:92px;top:5px;width:82px;height:82px;border-radius:50%;background:#ff0;mix-blend-mode:multiply}.cur{position:absolute;left:131px;top:44px;width:14px;height:22px}',
 `<div class="w"><table><colgroup><col style="width:16px"><col style="width:92px"><col></colgroup><tbody>${P.map(p=>p?`<tr class="${p[3]?'off':''}"><td class="i"></td><th scope="row"><div><b class="${p[0]?'':'n'}">${p[0]}</b>${p[1]}</div></th><td>${p[2]}</td></tr>`:'<tr class="cat"><td class="i"></td><td colspan="2"><div>Verhalten<ui-icon small name="chev"></ui-icon></div></td></tr>').join('')}</tbody></table></div><scroll-bar style="--before:19;--size:3;--after:4"></scroll-bar>
 <div class="halo"></div><svg class="cur" viewBox="0 0 14 22" aria-hidden="true"><path d="M1 1v15l3.5-3 2.5 6 3-1-3-6h5z" fill="#fff" stroke="#444"/></svg>`);
define('side-panes',':host{display:flex;flex:none;flex-direction:column;gap:2px;padding-top:1px}section{border:1px solid #999;background:#e0e0e0;display:flex;flex-direction:column}.p{flex:1;min-height:0}.tabs{display:flex;align-items:center;gap:6px;height:27px;padding:0 4px;background:linear-gradient(#ececec,#dadada)}.bar{display:flex;align-items:center;height:25px;padding-left:1px;background:linear-gradient(#f4f4f4,#9c9c9c);border-bottom:1px solid #888;margin-bottom:3px}.desc{flex:1;margin-top:7px;border:1px solid #bbb;background:#e6e6e6}',
 '<section><pane-header buttons="3">Berichts Explorer</pane-header><report-tree></report-tree><div class="tabs"><pill-tab on icon="explorer">Berichts Explorer</pill-tab><pill-tab icon="fields">Liste der Felder</pill-tab></div></section><section class="p"><pane-header buttons="3">Eigenschaften</pane-header><combo-box wide label="Objekt" value="TerminnachweisFuerBehandlungen ..."></combo-box><div class="bar"><tool-button on icon="cat" label="Kategorien"></tool-button><tool-button icon="az" label="Alphabetisch"></tool-button></div><property-grid></property-grid><div class="desc"></div></section>');

define('hint-bubble',':host{position:absolute;left:50%;top:242px;width:320px;height:237px;transform:translateX(-50%);display:flex;align-items:center;justify-content:center;text-align:center;border:2px solid #d6d6dc;border-radius:36px;background:linear-gradient(#6fa3f3,#0e62dc 50%,#2f78e4 65%,#67a4f6);box-shadow:2px 3px 4px #333;color:#fff;font:21px/24px "Liberation Sans",sans-serif;padding:0 16px 2px 14px}p{margin:0}','<p><slot></slot></p>');

define('report-designer',':host{display:flex;flex-direction:column;height:100vh;margin:0 33px;background:#e6e6e6;border-left:2px solid #2f6294;border-right:3px solid #3f74a6;padding:0 1px;position:relative;overflow:hidden}title-bar,menu-bar,tool-bars,footer,.edge{flex:none}main{flex:1;min-height:0;display:flex}.mid{flex:1;min-width:0;display:flex;flex-direction:column;gap:3px;padding-left:1px}group-pane{flex:1;min-height:0}side-panes{width:237px;margin:0 0 1px 3px}footer{height:24px;display:flex;justify-content:flex-end;align-items:flex-end;background:linear-gradient(#bdbdbd,#949494);border-top:2px solid #8c8c8c;border-bottom:1px solid #555}.edge{height:7px;background:linear-gradient(#e8e8e8 4px,#7ba2ba 4px)}',
 '<title-bar></title-bar><menu-bar></menu-bar><tool-bars></tool-bars><main><tool-box></tool-box><div class="mid"><report-document></report-document><group-pane></group-pane></div><side-panes></side-panes></main><footer><ui-icon name="resize"></ui-icon></footer><div class="edge"></div><hint-bubble>Alle Felder wurden<br>verschoben, so daß nun das<br>Format auf DINA5 umgestellt<br>werden kann.</hint-bubble>');
</script>
</body>
</html>
